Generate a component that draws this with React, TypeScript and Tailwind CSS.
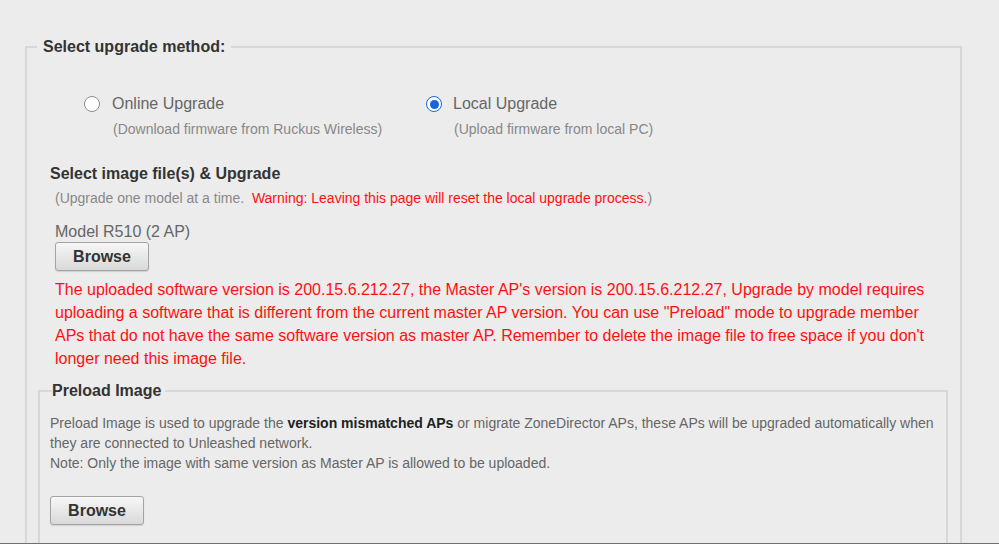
import React from "react";

function Radio({ checked }: { checked?: boolean }) {
  if (checked) {
    return (
      <span className="flex h-4 w-4 shrink-0 items-center justify-center rounded-full border-[1.5px] border-[#1767d9] bg-white">
        <span className="h-[9px] w-[9px] rounded-full bg-[#1767d9]" />
      </span>
    );
  }
  return <span className="block h-4 w-4 shrink-0 rounded-full border border-[#8d8d8d] bg-white" />;
}

function BrowseButton({ className = "" }: { className?: string }) {
  return (
    <button
      className={`block h-[29px] w-[94px] rounded-[3px] border border-[#a3a3a3] bg-gradient-to-b from-[#f7f7f7] to-[#d9d9d9] text-[16px] font-bold leading-[20px] text-[#333] shadow-[0_1px_1px_rgba(0,0,0,0.12)] ${className}`}
    >
      Browse
    </button>
  );
}

export default function App() {
  return (
    <div
      className="relative h-[544px] w-[999px] overflow-hidden border-b border-[#6f6f6f] bg-[#ececec]"
      style={{ fontFamily: '"Liberation Sans", Arial, sans-serif' }}
    >
      <fieldset className="ml-[25px] mt-[37px] w-[937px] border-2 border-[#d7d7d7] pb-[40px]">
        <legend className="ml-[10px] px-[6px] text-[16px] font-bold leading-[20px] text-[#333]">
          Select upgrade method:
        </legend>

        <div className="ml-[57px] mt-[37px] flex">
          <div className="w-[342px]">
            <div className="flex items-center gap-[12px]">
              <Radio />
              <span className="text-[16px] leading-[20px] text-[#666]">Online Upgrade</span>
            </div>
            <div className="ml-[29px] mt-[6px] text-[14px] leading-[18px] text-[#888]">
              (Download firmware from Ruckus Wireless)
            </div>
          </div>
          <div>
            <div className="flex items-center gap-[11px]">
              <Radio checked />
              <span className="text-[16px] leading-[20px] text-[#666]">Local Upgrade</span>
            </div>
            <div className="ml-[28px] mt-[6px] text-[14px] leading-[18px] text-[#888]">
              (Upload firmware from local PC)
            </div>
          </div>
        </div>

        <div className="ml-[23px] mt-[26px] text-[16px] font-bold leading-[20px] text-[#333]">
          Select image file(s) &amp; Upgrade
        </div>
        <div className="ml-[28px] mt-[5px] text-[14px] leading-[18px] text-[#888]">
          (Upgrade one model at a time.&nbsp;{" "}
          <span className="text-[#ff1010]">Warning: Leaving this page will reset the local upgrade process.</span>)
        </div>

        <div className="ml-[28px] mt-[15px] text-[16px] leading-[20px] text-[#666]">Model R510 (2 AP)</div>
        <BrowseButton className="ml-[28px] mt-[0px]" />

        <p className="ml-[28px] mt-[7px] w-[885px] text-[16px] leading-[23px] text-[#ff1010]">
          The uploaded software version is 200.15.6.212.27, the Master AP's version is 200.15.6.212.27, Upgrade by
          model requires uploading a software that is different from the current master AP version. You can use
          "Preload" mode to upgrade member APs that do not have the same software version as master AP. Remember to
          delete the image file to free space if you don't longer need this image file.
        </p>

        <fieldset className="ml-[11px] mr-[12px] mt-[11px] border-2 border-[#d7d7d7] pb-[40px] pl-[10px]">
          <legend className="ml-[2px] px-0 pr-[4px] text-[16px] font-bold leading-[20px] text-[#333]">
            Preload Image
          </legend>
          <div className="mt-[12px] w-[886px] text-[14px] leading-[20px] text-[#666]">
            <div>
              Preload Image is used to upgrade the <b className="text-[#222]">version mismatched APs</b> or migrate
              ZoneDirector APs, these APs will be upgraded automatically when they are connected to Unleashed network.
            </div>
            <div>Note: Only the image with same version as Master AP is allowed to be uploaded.</div>
          </div>
          <BrowseButton className="mt-[23px]" />
        </fieldset>
      </fieldset>
    </div>
  );
}
